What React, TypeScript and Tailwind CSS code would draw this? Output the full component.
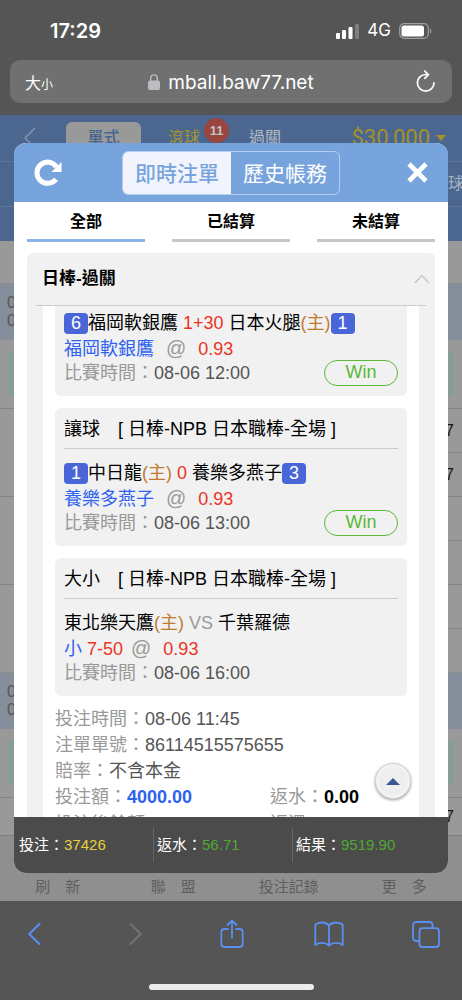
import { useState } from "react";
import type { ReactNode } from "react";
import clsx from "clsx";

interface Bet {
  title?: string;
  teams: ReactNode;
  pick: ReactNode;
  time: string;
  result?: string;
}

function Score({ children }: { children: ReactNode }) {
  return (
    <span className="inline-block h-[21px] w-6 rounded-sm bg-[#4866d8] text-center leading-[21px] text-white">
      {children}
    </span>
  );
}

function Host() {
  return <span className="text-[#c27a30]">(主)</span>;
}

function Odds() {
  return (
    <>
      <span className="text-[20px] text-[#999]">@</span>
      <span className="ml-3 text-[#ea3323]">0.93</span>
    </>
  );
}

const bets: Bet[] = [
  {
    teams: (
      <>
        <Score>6</Score>福岡軟銀鷹 <span className="text-[#ea3323]">1+30</span> 日本火腿
        <Host />
        <Score>1</Score>
      </>
    ),
    pick: (
      <>
        <span className="mr-3 text-[#2e62f0]">福岡軟銀鷹</span>
        <Odds />
      </>
    ),
    time: "08-06 12:00",
    result: "Win",
  },
  {
    title: "讓球",
    teams: (
      <>
        <Score>1</Score>中日龍
        <Host /> <span className="text-[#ea3323]">0</span> 養樂多燕子
        <Score>3</Score>
      </>
    ),
    pick: (
      <>
        <span className="mr-3 text-[#2e62f0]">養樂多燕子</span>
        <Odds />
      </>
    ),
    time: "08-06 13:00",
    result: "Win",
  },
  {
    title: "大小",
    teams: (
      <>
        東北樂天鷹
        <Host /> <span className="text-[#999]">VS</span> 千葉羅德
      </>
    ),
    pick: (
      <>
        <span className="text-[#2e62f0]">小</span>{" "}
        <span className="mr-2 text-[#ea3323]">7-50</span>
        <Odds />
      </>
    ),
    time: "08-06 16:00",
  },
];

const totals = [
  { label: "投注", value: "37426", color: "text-[#e8d13c]" },
  { label: "返水", value: "56.71", color: "text-[#52a832]" },
  { label: "結果", value: "9519.90", color: "text-[#52a832]" },
];

function StatusBar() {
  return (
    <div className="flex h-[60px] items-center justify-between pl-[50px] pr-[30px] pt-[2px] font-['Inter',sans-serif] text-white">
      <span className="text-[20px] font-semibold">17:29</span>
      <div className="flex items-center gap-2">
        <svg width="23" height="15" viewBox="0 0 23 15" fill="white">
          <rect x="0" y="9" width="4" height="6" rx="1" />
          <rect x="6" y="6" width="4" height="9" rx="1" />
          <rect x="12.500" y="3" width="4" height="12" rx="1" />
          <rect x="19" y="0" width="4" height="15" rx="1" opacity=".25" />
        </svg>
        <span className="text-[17px]">4G</span>
        <svg width="33" height="16" viewBox="0 0 33 16" fill="none">
          <rect x=".7" y=".7" width="28.600" height="14.600" rx="4.500" stroke="#a0a0a0" strokeWidth="1.200" />
          <rect x="2.500" y="2.500" width="22.500" height="11" rx="2.500" fill="white" />
          <path d="M31 5.500c1.800.8 1.800 4.200 0 5z" fill="#a0a0a0" />
        </svg>
      </div>
    </div>
  );
}

function AddressBar() {
  return (
    <div className="px-[10px] pb-3">
      <div className="flex h-[43px] items-center justify-between rounded-[10px] bg-[#707070] px-[15px] text-white">
        <button aria-label="文字大小" className="w-10 text-left font-['Noto_Sans_CJK_TC',sans-serif]">
          <span className="text-[16px]">大</span>
          <span className="text-[12px]">小</span>
        </button>
        <div className="flex items-center gap-2 pt-1 font-['Inter',sans-serif] text-[19px]">
          <svg className="-mt-1" width="12" height="16" viewBox="0 0 12 16">
            <rect x="0" y="6.500" width="12" height="9.500" rx="2" fill="#bcbcc2" />
            <path d="M2.700 7V4.200a3.300 3.300 0 0 1 6.600 0V7" fill="none" stroke="#bcbcc2" strokeWidth="1.400" />
          </svg>
          mball.baw77.net
        </div>
        <button aria-label="重新整理" className="flex w-10 justify-end">
          <svg width="22" height="24" viewBox="0 0 22 24" fill="none" stroke="white" strokeWidth="1.700" strokeLinecap="round" strokeLinejoin="round">
            <path d="M19 12.800a8.300 8.300 0 1 1-8.300-8.300h2.200" />
            <path d="M9.800 1.200l3.600 3.500-3.600 3.600" />
          </svg>
        </button>
      </div>
    </div>
  );
}

function MatchDate() {
  return (
    <div className="h-[57px] border-t border-[#8d8d8d] bg-[#848f9b] py-[10px] pl-[7px] text-[16px] leading-[18px] text-[#555]">
      <div>0</div>
      <div>0</div>
    </div>
  );
}

function OddsRows({ values }: { values: string[] }) {
  return (
    <div className="grid grid-cols-2">
      <div className="border-t border-[#848484]" />
      <div className="flex h-11 items-center justify-end border-t border-[#848484] pr-2 text-[16px] text-[#151515]">
        {values[0]}
      </div>
      <div />
      <div className="flex h-11 items-center justify-end border-t border-[#848484] pr-2 text-[16px] text-[#151515]">
        {values[1]}
      </div>
    </div>
  );
}

function OddsBox() {
  return (
    <div className="px-[9px] py-3">
      <div className="h-11 border-2 border-[#7fa096] bg-[#8f9b97]" />
    </div>
  );
}

// Dimmed betting page that sits behind the dialog
function SportsPage() {
  return (
    <div className="flex flex-1 flex-col bg-[#999]">
      <div className="bg-[#4b6790]">
        <div className="flex h-[46px] items-start pl-6 pr-4 pt-[7px] text-[16px] text-[#b3b9c2]">
          <svg className="mt-[5px]" width="12" height="22" viewBox="0 0 12 22" fill="none" stroke="#8494aa" strokeWidth="1.500">
            <path d="M11 1L1 11l10 10" />
          </svg>
          <button className="ml-[30px] h-[39px] w-[75px] rounded-t-md bg-[#999] pb-[7px] font-medium text-[#46648f]">單式</button>
          <button className="ml-[27px] mt-[4px] text-[#a4952f]">滾球</button>
          <span className="-mt-[4px] ml-[4px] flex size-[25px] items-center justify-center rounded-full bg-[#994540] text-[13px] font-bold text-[#c4c4c4]">
            11
          </span>
          <button className="ml-5 mt-[4px]">過關</button>
          <span className="ml-auto flex items-center gap-[6px] whitespace-nowrap font-['Roboto',sans-serif] text-[22px] leading-8 text-[#a4912a]">
            $30,000
            <svg width="10" height="6" viewBox="0 0 10 6" fill="#a4912a">
              <path d="M0 0h10L5 6z" />
            </svg>
          </span>
        </div>
        <div className="flex h-[46px] items-center justify-end border-y border-[#5b7599] text-[16px] text-[#a9b2bf]">
          <span className="-mr-[2px]">籃球</span>
        </div>
        <div className="h-[34px]" />
      </div>
      <div className="h-[42px]" />
      <MatchDate />
      <OddsBox />
      <OddsRows values={["7", "7"]} />
      <OddsRows values={["", ""]} />
      <OddsRows values={["", ""]} />
      <MatchDate />
      <OddsBox />
      <div className="flex h-[38px] items-center justify-end border-t border-[#848484] pr-2 text-[16px] text-[#151515]">
        7
      </div>
      <nav className="grid flex-1 grid-cols-4 items-end border-t border-[#7d7d7d] bg-[#8f8f8f] pb-[3px] text-center text-[15px] text-[#5f5f5f]">
        <a href="#refresh">刷　新</a>
        <a href="#league">聯　盟</a>
        <a href="#records">投注記錄</a>
        <a href="#more">更　多</a>
      </nav>
    </div>
  );
}

function BetCard({ bet }: { bet: Bet }) {
  return (
    <div
      className={clsx(
        "bg-[#f1f1f1] px-[9px] pb-[10px]",
        bet.title ? "mt-3 rounded-md" : "rounded-b-md pt-[5px]"
      )}
    >
      {bet.title && (
        <div className="mb-3 h-[41px] border-b border-[#ccc] pt-px leading-10">
          {bet.title}　[ 日棒-NPB 日本職棒-全場 ]
        </div>
      )}
      <div className="h-[25px] whitespace-nowrap leading-[25px]">{bet.teams}</div>
      <div className="h-[25px] leading-[25px]">{bet.pick}</div>
      <div className="flex h-[25px] items-center justify-between">
        <span className="text-[#555]">
          <span className="text-[#999]">比賽時間：</span>
          {bet.time}
        </span>
        {bet.result && (
          <span className="mb-[2px] flex h-[26px] w-[74px] items-center justify-center rounded-full border border-[#5ab83a] text-[#5ab83a]">
            {bet.result}
          </span>
        )}
      </div>
    </div>
  );
}

function BetDialog() {
  const [view, setView] = useState("即時注單");
  const [filter, setFilter] = useState("全部");

  return (
    <div
      role="dialog"
      aria-label="投注記錄"
      className="absolute inset-x-[14px] bottom-7 top-7 z-20 flex flex-col overflow-hidden rounded-[12px] bg-white"
    >
      <header className="flex h-[59px] shrink-0 items-center justify-between bg-[#78a4dd] px-5 text-white">
        <button aria-label="重新整理" className="w-7">
          <svg width="28" height="27" viewBox="0 0 28 27" fill="none">
            <path d="M22 20.200A10.600 10.600 0 1 1 22.500 8" stroke="white" strokeWidth="5" />
            <path d="M27.500 3v10h-10z" fill="white" />
          </svg>
        </button>
        <div className="flex h-11 overflow-hidden rounded-md border border-[#b5cdee] text-[21px]">
          {["即時注單", "歷史帳務"].map((name) => (
            <button
              key={name}
              onClick={() => setView(name)}
              className={clsx("w-[108px] pt-[2px]", view === name ? "bg-[#f1f4fc] font-medium text-[#78a4dd]" : "text-white")}
            >
              {name}
            </button>
          ))}
        </div>
        <button aria-label="關閉" className="flex w-7 justify-end">
          <svg width="21" height="21" viewBox="0 0 21 21" stroke="white" strokeWidth="4.600">
            <path d="M2 2l17 17M19 2L2 19" />
          </svg>
        </button>
      </header>

      <div className="flex justify-between px-[13px] pb-[11px]">
        {["全部", "已結算", "未結算"].map((name) => (
          <button
            key={name}
            onClick={() => setFilter(name)}
            className={clsx(
              "h-10 w-[118px] border-b-[3px] pt-[3px] text-[16px] font-bold text-black",
              filter === name ? "border-[#8cb4ea]" : "border-[#c8c8c8]"
            )}
          >
            {name}
          </button>
        ))}
      </div>

      <section className="mx-[13px] flex min-h-0 flex-1 flex-col rounded-t-md bg-[#f1f1f1] text-[18px] text-black">
        <div className="mx-[9px] flex h-[53px] shrink-0 items-center justify-between border-b border-[#ccc] pl-[6px]">
          <h2 className="text-[17px] font-bold">日棒-過關</h2>
          <button aria-label="收合" className="-mr-1">
            <svg width="16" height="10" viewBox="0 0 16 10" fill="none" stroke="#c8c8c8" strokeWidth="1.500">
              <path d="M1 9l7-7.500L15 9" />
            </svg>
          </button>
        </div>
        <div className="mx-4 min-h-0 flex-1 overflow-hidden bg-white px-3">
          {bets.map((bet) => (
            <BetCard key={bet.time} bet={bet} />
          ))}
          <div className="mt-[10px] leading-[26px] text-[#999]">
            <div>
              投注時間：<span className="text-[#555]">08-06 11:45</span>
            </div>
            <div>
              注單單號：<span className="text-[#555]">86114515575655</span>
            </div>
            <div>
              賠率：<span className="text-[#555]">不含本金</span>
            </div>
            <div className="grid grid-cols-[215px_1fr] gap-y-px whitespace-nowrap">
              <div>
                投注額：<b className="text-[#2e62f0]">4000.00</b>
              </div>
              <div>
                返水：<b className="text-black">0.00</b>
              </div>
              <div>
                投注後餘額：<b className="text-[#52a832]">34305.37</b>
              </div>
              <div>
                返還：<b className="text-[#52a832]">4704.00</b>
              </div>
            </div>
          </div>
        </div>
      </section>

      <button
        aria-label="回到頂部"
        className="absolute bottom-[74px] right-[37px] flex size-9 items-center justify-center rounded-full border border-[#d2d2d2] bg-[#eee] shadow-[0_1px_3px_rgba(0,0,0,0.4),inset_0_0_4px_#fff]"
      >
        <svg width="14" height="7" viewBox="0 0 14 7" fill="#38578f">
          <path d="M7 0l7 7H0z" />
        </svg>
      </button>

      <footer className="grid h-14 shrink-0 grid-cols-[139px_139px_1fr] items-center bg-[#4b4b4b] text-[15px] text-white">
        {totals.map((t, i) => (
          <div key={t.label} className={clsx("flex h-[34px] items-center", i > 0 ? "border-l border-[#666] pl-[3px]" : "pl-[5px]")}>
            {t.label}：<span className={t.color}>{t.value}</span>
          </div>
        ))}
      </footer>
    </div>
  );
}

function BrowserToolbar() {
  return (
    <div className="h-[99px] bg-[#555]">
      <div className="flex h-[66px] items-center justify-between pl-7 pr-[22px] text-[#5b8ff0]">
        <button aria-label="上一頁">
          <svg width="13" height="22" viewBox="0 0 13 22" fill="none" stroke="currentColor" strokeWidth="2" strokeLinecap="round" strokeLinejoin="round">
            <path d="M11.500 1L1.200 11l10.300 10" />
          </svg>
        </button>
        <button aria-label="下一頁" className="ml-5 text-[#737373]">
          <svg width="13" height="22" viewBox="0 0 13 22" fill="none" stroke="currentColor" strokeWidth="2" strokeLinecap="round" strokeLinejoin="round">
            <path d="M1.500 1l10.300 10L1.500 21" />
          </svg>
        </button>
        <button aria-label="分享" className="ml-[10px]">
          <svg width="24" height="30" viewBox="0 0 24 30" fill="none" stroke="currentColor" strokeWidth="1.800" strokeLinecap="round" strokeLinejoin="round">
            <path d="M8 10H4.500A3.200 3.200 0 0 0 1.300 13.200v11.600A3.200 3.200 0 0 0 4.500 28h15a3.200 3.200 0 0 0 3.200-3.200V13.200A3.200 3.200 0 0 0 19.500 10H16" />
            <path d="M12 18.500V1.500M7.500 6L12 1.500 16.500 6" />
          </svg>
        </button>
        <button aria-label="書籤" className="ml-[2px]">
          <svg width="30" height="26" viewBox="0 0 30 26" fill="none" stroke="currentColor" strokeWidth="1.800" strokeLinejoin="round">
            <path d="M15 4.500C13 2.300 10.500 1.500 8 1.500S3.200 2.200 1.300 3.800V24c2-1.500 4.300-2.100 6.700-2.100s5 .8 7 2.600c2-1.800 4.600-2.600 7-2.600s4.700.6 6.700 2.100V3.800C26.800 2.200 24.500 1.500 22 1.500s-5 .8-7 3zM15 4.500v20" />
          </svg>
        </button>
        <button aria-label="分頁">
          <svg width="28" height="27" viewBox="0 0 28 27" fill="none" stroke="currentColor" strokeWidth="1.800" strokeLinejoin="round">
            <rect x="7.500" y="7.200" width="19.500" height="18.800" rx="3" />
            <path d="M7.500 20H4.200A3.200 3.200 0 0 1 1 16.800V4.200A3.200 3.200 0 0 1 4.200 1h13.100a3.200 3.200 0 0 1 3.200 3.200v3" />
          </svg>
        </button>
      </div>
      <div className="mx-auto mt-[17px] h-[6px] w-[165px] rounded-full bg-[#ececec]" />
    </div>
  );
}

export default function App() {
  return (
    <div className="flex min-h-screen flex-col bg-[#555] font-['Liberation_Sans','Noto_Sans_CJK_TC',sans-serif]">
      <StatusBar />
      <AddressBar />
      <main className="relative flex flex-1 flex-col overflow-hidden">
        <SportsPage />
        <BetDialog />
      </main>
      <BrowserToolbar />
    </div>
  );
}
